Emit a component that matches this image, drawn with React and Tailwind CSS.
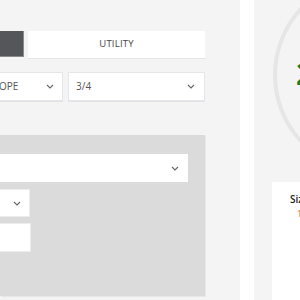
import { FiChevronDown } from "react-icons/fi";

const Chevron = ({ className }) => (
  <svg viewBox="0 0 8 5" className={"w-[8px] h-[5px] " + className}>
    <path d="M1 1l3 3 3-3" fill="none" stroke="#666" strokeWidth="1.1" />
  </svg>
);

const App = () => {
  return (
    <div
      className="w-[300px] h-[300px] flex flex-row overflow-hidden bg-white"
      style={{ fontFamily: "'Open Sans', 'Liberation Sans', sans-serif" }}
    >
      {/*left panel*/}
      <div className="w-[240px] shrink-0 h-full bg-[#f4f4f4] flex flex-col">
        {/*tabs*/}
        <div className="mt-[31px] flex flex-row gap-x-[4px] w-[205px] h-[27px]">
          <div className="w-[24px] h-[26px] bg-[#54565a] border-r border-b border-[#8a8b8d]"></div>
          <div className="flex-1 h-[27px] bg-white shadow-[0_1px_0_#e4e4e4] flex items-center justify-center text-[9.5px] text-[#444] tracking-[0.2px]">
            UTILITY
          </div>
        </div>

        {/*selects*/}
        <div className="mt-[14px] flex flex-row gap-x-[5px] w-[205px] h-[29px]">
          <div className="w-[63px] bg-white border border-l-0 border-[#e6e6ea] shadow-[0_1px_0_#e2e2e8] flex items-center justify-between pr-[8px] text-[10px] text-[#555] overflow-hidden">
            <span className="-ml-[1px]">OPE</span>
            <Chevron />
          </div>
          <div className="flex-1 bg-white border border-[#e6e6ea] shadow-[0_1px_0_#e2e2e8] flex items-center justify-between pl-[7px] pr-[9px] text-[10px] text-[#555]">
            <span>3/4</span>
            <Chevron />
          </div>
        </div>

        {/*options box*/}
        <div className="mt-[34px] w-[205px] h-[161px] bg-[#dbdbdb] shadow-[1px_1px_0_#e8e8e8] flex flex-col pt-[19px]">
          <div className="w-[188px] h-[28px] bg-white flex items-center justify-end pr-[9px]">
            <Chevron />
          </div>
          <div className="mt-[7px] w-[30px] h-[28px] bg-white border border-l-0 border-[#ececec] flex items-center justify-end pr-[8px]">
            <Chevron />
          </div>
          <div className="mt-[6px] w-[31px] h-[29px] bg-white border border-l-0 border-[#ececec]"></div>
        </div>
      </div>

      {/*gap*/}
      <div className="w-[14px] shrink-0 h-full bg-white"></div>

      {/*right panel*/}
      <div className="relative flex-1 h-full bg-[#f4f4f4] overflow-hidden">
        <svg
          className="absolute left-0 top-0"
          width="46"
          height="300"
          viewBox="254 0 46 300"
        >
          <circle cx="372" cy="75" r="97" fill="none" stroke="#e6e6e6" strokeWidth="4" />
        </svg>
        <div className="absolute left-[42px] top-[58px] text-[31px] font-bold leading-none text-[#1a7d22]">
          2
        </div>
        <div className="absolute left-[18px] top-[182px] w-[200px] h-[150px] bg-white pt-[11px] pl-[18px]">
          <div className="text-[10px] font-semibold text-[#222] leading-[12px]">Size</div>
          <div className="mt-[3px] ml-[7px] text-[9px] text-[#d0702a] leading-[12px]">1</div>
        </div>
      </div>
    </div>
  );
};

export default App;
